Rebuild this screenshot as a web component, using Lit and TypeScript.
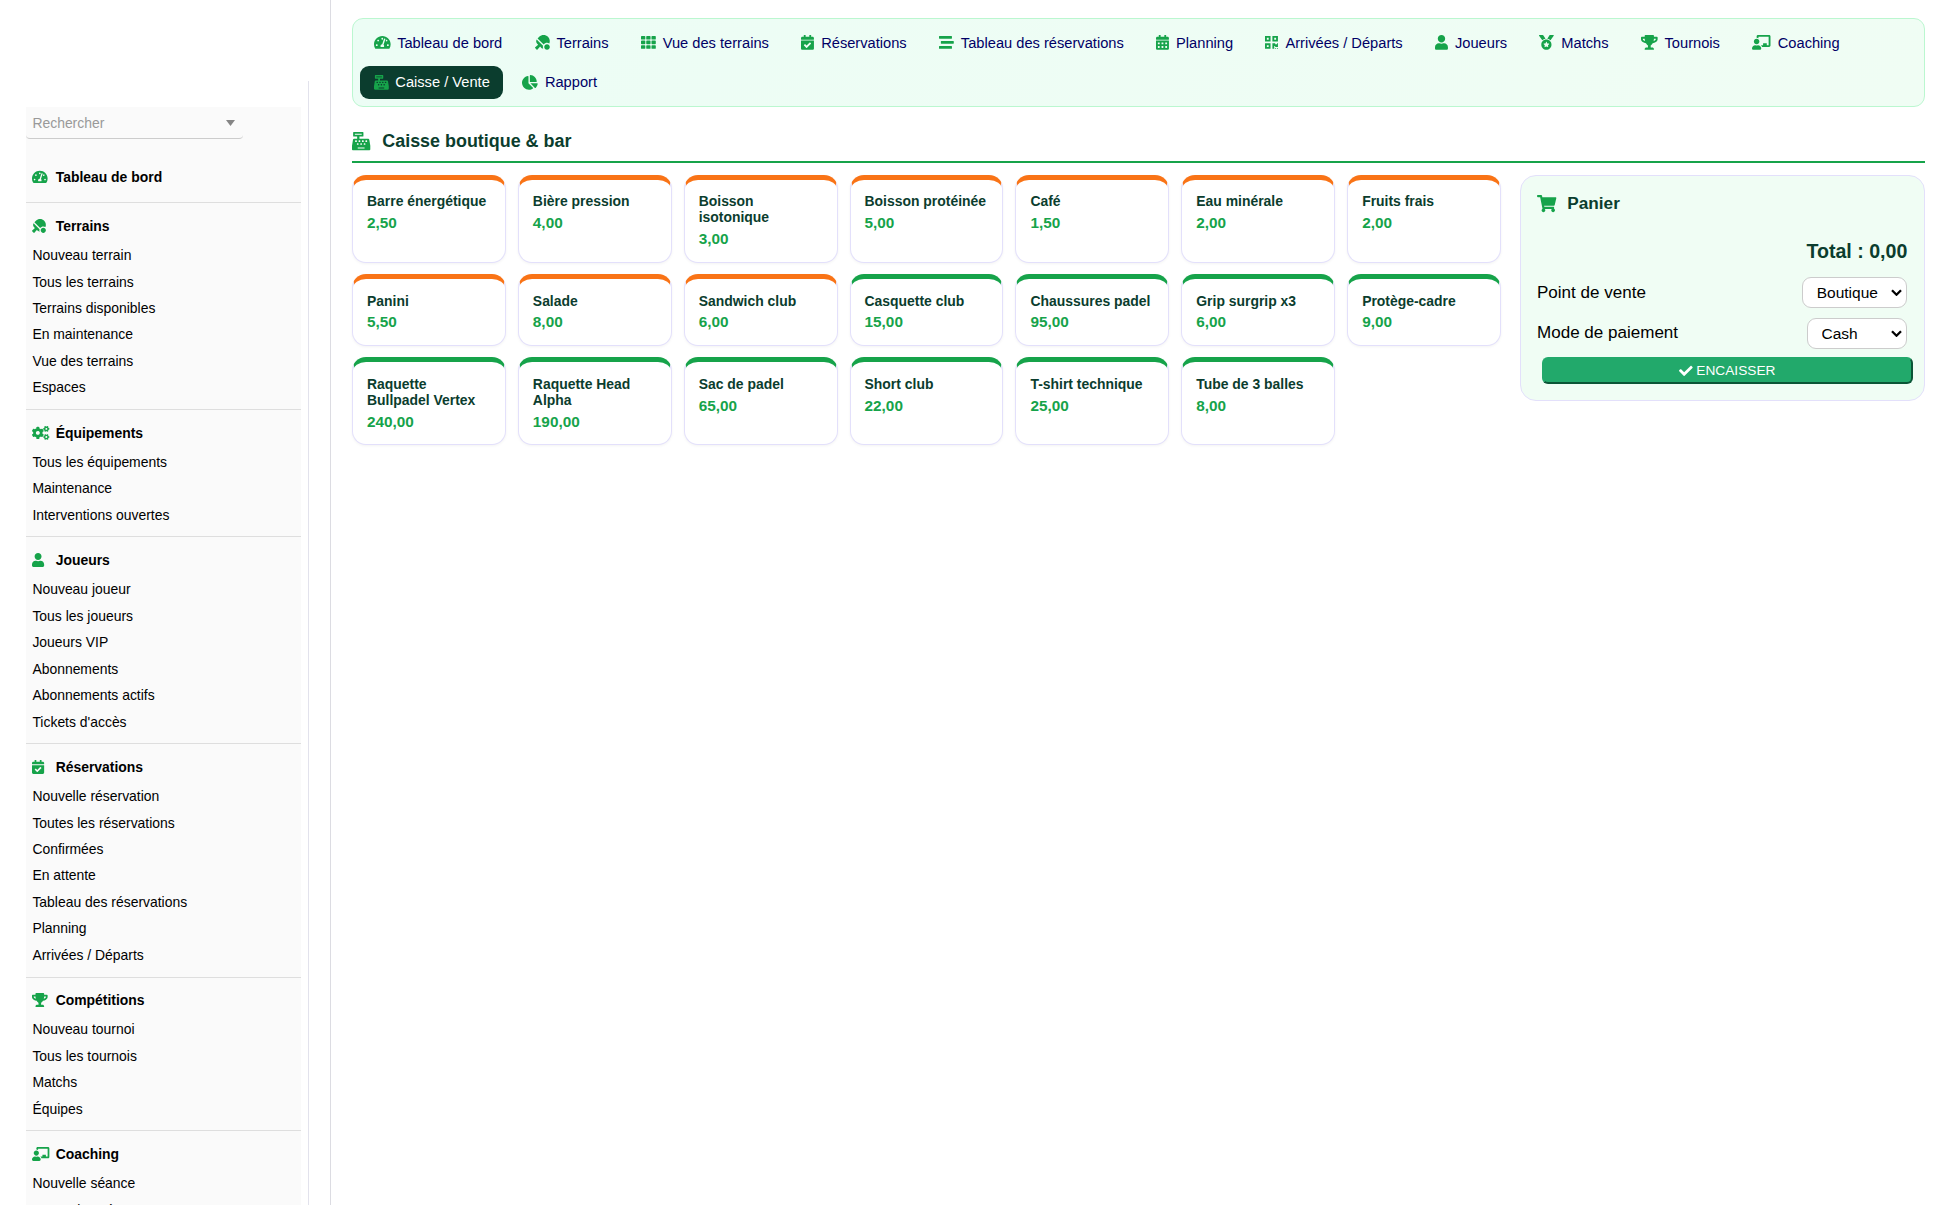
import { LitElement, html, svg, css } from "lit";
import { customElement, property } from "lit/decorators.js";

const box = (x: number, y: number) =>
  `M${x + 12} ${y}h40c6.600 0 12 5.400 12 12v40c0 6.600-5.400 12-12 12h-40c-6.600 0-12-5.400-12-12v-40c0-6.600 5.400-12 12-12z`;
const cell = (x: number, y: number) =>
  `M${x + 24} ${y}h101.330c13.260 0 24 10.750 24 24v80c0 13.260-10.740 24-24 24h-101.330c-13.260 0-24-10.740-24-24v-80c0-13.250 10.740-24 24-24z`;

// Each entry: [viewBox width, path]. All glyphs are 512 units high.
const ICONS: Record<string, [number, string]> = {
  gauge: [576, "M288 32C128.94 32 0 160.94 0 320c0 52.8 14.25 102.26 39.06 144.8 5.61 9.62 16.3 15.2 27.44 15.2h443c11.14 0 21.83-5.58 27.44-15.2C561.75 422.26 576 372.8 576 320c0-159.06-128.94-288-288-288zm0 64c14.71 0 26.58 10.13 30.32 23.65-1.11 2.26-2.64 4.23-3.45 6.67l-9.22 27.67c-5.13 3.49-10.97 6.01-17.64 6.01-17.67 0-32-14.33-32-32S270.33 96 288 96zM96 384c-17.67 0-32-14.33-32-32s14.33-32 32-32 32 14.33 32 32-14.33 32-32 32zm48-160c-17.67 0-32-14.33-32-32s14.33-32 32-32 32 14.33 32 32-14.33 32-32 32zm246.77-72.41l-61.33 184C343.13 347.33 352 364.54 352 384c0 11.72-3.38 22.55-8.88 32H232.88c-5.5-9.45-8.88-20.28-8.88-32 0-33.94 26.5-61.43 59.9-63.59l61.34-184.01c4.17-12.56 17.73-19.45 30.36-15.17 12.57 4.19 19.35 17.79 15.17 30.36zm14.66 57.2l15.52-46.55c3.47-1.29 7.13-2.23 11.05-2.23 17.67 0 32 14.33 32 32s-14.33 32-32 32c-11.38-.01-20.89-6.28-26.57-15.22zM480 384c-17.67 0-32-14.33-32-32s14.33-32 32-32 32 14.33 32 32-14.33 32-32 32z"],
  paddle: [512, "M496.2 296.5C527.7 218.7 512 126.2 449 63.1 365.1-21 229-21 145.1 63.1l-56 56.1 211.5 211.5c46.1-62.1 131.5-77.4 195.6-34.2zm-217.9 79.7L57.9 155.9c-27.3 45.3-21.7 105 17.3 144.1l34.5 34.6L6.7 424c-8.6 7.5-9.1 20.7-1 28.8l53.4 53.5c8 8.1 21.2 7.6 28.7-1L177.1 402l35.7 35.7c19.7 19.7 44.6 30.5 70.3 33.3-7.1-17-11-35.6-11-55.1-.1-13.8 2.5-27 6.2-39.7zM416 320c-53 0-96 43-96 96s43 96 96 96 96-43 96-96-43-96-96-96z"],
  grid: [512, [0, 181.33, 362.67].map((x) => [32, 192, 352].map((y) => cell(x, y)).join("")).join("")],
  calCheck: [448, "M436 160H12c-6.627 0-12-5.373-12-12v-36c0-26.51 21.49-48 48-48h48V12c0-6.627 5.373-12 12-12h40c6.627 0 12 5.373 12 12v52h128V12c0-6.627 5.373-12 12-12h40c6.627 0 12 5.373 12 12v52h48c26.51 0 48 21.49 48 48v36c0 6.627-5.373 12-12 12zM12 192h424c6.627 0 12 5.373 12 12v260c0 26.51-21.49 48-48 48H48c-26.51 0-48-21.49-48-48V204c0-6.627 5.373-12 12-12zm333.296 95.947l-28.169-28.398c-4.667-4.705-12.265-4.736-16.97-.068L194.12 364.665l-45.98-46.352c-4.667-4.705-12.266-4.736-16.971-.068l-28.397 28.17c-4.705 4.667-4.736 12.265-.068 16.97l82.601 83.269c4.667 4.705 12.265 4.736 16.97.068l142.953-141.805c4.705-4.667 4.736-12.265.068-16.97z"],
  stream: [512, "M16 128h416c8.84 0 16-7.16 16-16V48c0-8.84-7.16-16-16-16H16C7.16 32 0 39.16 0 48v64c0 8.84 7.16 16 16 16zm480 80H80c-8.84 0-16 7.16-16 16v64c0 8.84 7.16 16 16 16h416c8.84 0 16-7.16 16-16v-64c0-8.84-7.16-16-16-16zm-64 176H16c-8.84 0-16 7.16-16 16v64c0 8.84 7.16 16 16 16h416c8.84 0 16-7.16 16-16v-64c0-8.84-7.16-16-16-16z"],
  calDays: [448, "M436 160H12c-6.627 0-12-5.373-12-12v-36c0-26.51 21.49-48 48-48h48V12c0-6.627 5.373-12 12-12h40c6.627 0 12 5.373 12 12v52h128V12c0-6.627 5.373-12 12-12h40c6.627 0 12 5.373 12 12v52h48c26.51 0 48 21.49 48 48v36c0 6.627-5.373 12-12 12zM0 192h448v272c0 26.51-21.49 48-48 48H48c-26.51 0-48-21.49-48-48z" + [64, 192, 320].map((x) => box(x, 256) + box(x, 384)).join("")],
  qr: [448, "M0 224h192V32H0v192zM64 96h64v64H64V96zm192-64v192h192V32H256zm128 128h-64V96h64v64zM0 480h192V288H0v192zm64-128h64v64H64v-64zm352-64h32v128h-96v-32h-32v96h-64V288h96v32h64v-32zm0 160h32v32h-32v-32zm-64 0h32v32h-32v-32z"],
  user: [448, "M224 256c70.7 0 128-57.3 128-128S294.7 0 224 0 96 57.3 96 128s57.3 128 128 128zm89.6 32h-16.7c-22.2 10.2-46.9 16-72.9 16s-50.6-5.8-72.9-16h-16.7C60.2 288 0 348.2 0 422.4V464c0 26.5 21.5 48 48 48h352c26.5 0 48-21.5 48-48v-41.6c0-74.2-60.2-134.4-134.4-134.4z"],
  medal: [512, "M223.75 130.75L154.62 15.54A31.997 31.997 0 0 0 127.18 0H16.03C3.08 0-4.5 14.57 2.92 25.18l111.27 158.96c29.72-27.77 67.52-46.83 109.56-53.39zM495.97 0H384.82c-11.24 0-21.66 5.9-27.44 15.54l-69.13 115.21c42.04 6.56 79.84 25.62 109.56 53.38L509.08 25.18C516.5 14.57 508.92 0 495.97 0zM256 160c-97.2 0-176 78.8-176 176s78.8 176 176 176 176-78.8 176-176-78.8-176-176-176zm92.52 157.26l-37.93 36.96 8.97 52.22c1.6 9.36-8.26 16.51-16.65 12.09L256 393.88l-46.9 24.65c-8.4 4.45-18.25-2.74-16.65-12.09l8.97-52.22-37.93-36.96c-6.82-6.64-3.05-18.23 6.35-19.59l52.43-7.64 23.43-47.52c2.11-4.28 6.19-6.39 10.28-6.39 4.11 0 8.22 2.14 10.33 6.39l23.43 47.52 52.43 7.64c9.4 1.36 13.17 12.95 6.35 19.59z"],
  trophy: [576, "M552 64H448V24c0-13.3-10.7-24-24-24H152c-13.3 0-24 10.7-24 24v40H24C10.7 64 0 74.7 0 88v56c0 35.7 22.5 72.4 61.9 100.7 31.5 22.7 69.8 37.1 110 41.7C203.3 338.5 240 360 240 360v72h-48c-35.3 0-64 20.7-64 56v12c0 6.6 5.4 12 12 12h296c6.6 0 12-5.4 12-12v-12c0-35.3-28.7-56-64-56h-48v-72s36.7-21.5 68.1-73.6c40.3-4.6 78.6-19 110-41.7 39.3-28.3 61.9-65 61.9-100.7V88c0-13.3-10.7-24-24-24zM99.3 192.8C74.9 175.2 64 155.6 64 144v-16h64.2c1 32.6 5.8 61.2 12.8 86.2-15.1-5.2-29.2-12.4-41.7-21.4zM512 144c0 16.1-17.7 36.1-35.3 48.8-12.5 9-26.7 16.2-41.8 21.4 7-25 11.8-53.6 12.8-86.2H512v16z"],
  coach: [640, "M208 352c-2.39 0-4.78.35-7.06 1.09C187.98 357.3 174.35 360 160 360c-14.35 0-27.98-2.7-40.95-6.91-2.28-.74-4.66-1.09-7.05-1.09C49.94 352-.33 402.48 0 464.62.14 490.88 21.73 512 48 512h224c26.27 0 47.86-21.12 48-47.38.33-62.14-49.94-112.62-112-112.62zm-48-32c53.02 0 96-42.98 96-96s-42.98-96-96-96-96 42.98-96 96 42.98 96 96 96zM592 0H208c-26.47 0-48 22.25-48 49.59V96c23.42 0 45.1 6.78 64 17.8V64h352v288h-64v-64H384v64h-76.24c19.1 16.69 33.12 38.73 39.69 64H592c26.47 0 48-22.25 48-49.59V49.59C640 22.25 618.47 0 592 0z"],
  register: [512, "M511.1 378.8l-26.7-160c-2.6-15.4-15.9-26.7-31.6-26.7H208v-64h96c8.8 0 16-7.2 16-16V16c0-8.8-7.2-16-16-16H48c-8.800 0-16 7.200-16 16v96c0 8.800 7.200 16 16 16h96v64H59.100c-15.600 0-29 11.300-31.600 26.700L.8 378.700c-.6 3.500-.9 7-.9 10.500V480c0 17.700 14.300 32 32 32h448c17.700 0 32-14.300 32-32v-90.700c.1-3.500-.2-7-.8-10.500zM280 248c0-8.800 7.200-16 16-16h16c8.800 0 16 7.200 16 16v16c0 8.800-7.200 16-16 16h-16c-8.800 0-16-7.200-16-16v-16zm-32 64h16c8.800 0 16 7.200 16 16v16c0 8.800-7.200 16-16 16h-16c-8.800 0-16-7.200-16-16v-16c0-8.800 7.200-16 16-16zm-32-80c8.800 0 16 7.200 16 16v16c0 8.800-7.200 16-16 16h-16c-8.800 0-16-7.200-16-16v-16c0-8.800 7.200-16 16-16h16zM80 80V48h192v32H80zm40 200h-16c-8.800 0-16-7.200-16-16v-16c0-8.800 7.200-16 16-16h16c8.800 0 16 7.200 16 16v16c0 8.800-7.200 16-16 16zm16 64v-16c0-8.800 7.200-16 16-16h16c8.800 0 16 7.200 16 16v16c0 8.800-7.200 16-16 16h-16c-8.800 0-16-7.200-16-16zm216 112c0 4.400-3.600 8-8 8H168c-4.400 0-8-3.600-8-8v-16c0-4.400 3.600-8 8-8h176c4.400 0 8 3.600 8 8v16zm24-112c0 8.800-7.200 16-16 16h-16c-8.800 0-16-7.200-16-16v-16c0-8.800 7.200-16 16-16h16c8.800 0 16 7.200 16 16v16zm48-80c0 8.800-7.200 16-16 16h-16c-8.800 0-16-7.200-16-16v-16c0-8.800 7.200-16 16-16h16c8.800 0 16 7.200 16 16v16z"],
  pie: [544, "M527.79 288H290.5l158.03 158.03c6.04 6.04 15.98 6.53 22.19.68 38.7-36.46 65.32-85.61 73.13-140.86 1.34-9.46-6.51-17.85-16.06-17.85zm-15.83-64.8C503.72 103.74 408.26 8.28 288.8.04 279.68-.59 272 7.1 272 16.24V240h223.77c9.14 0 16.82-7.68 16.19-16.8zM224 288V50.71c0-9.55-8.39-17.4-17.84-16.06C86.99 51.49-4.1 155.6.14 280.37 4.5 408.51 114.83 513.59 243.03 511.98c50.4-.63 96.97-16.87 135.26-44.03 7.9-5.6 8.42-17.23 1.57-24.08L224 288z"],
  cart: [576, "M528.12 301.319l47.273-208C578.806 78.301 567.391 64 551.99 64H159.208l-9.166-44.81C147.758 8.021 137.93 0 126.529 0H24C10.745 0 0 10.745 0 24v16c0 13.255 10.745 24 24 24h69.883l70.248 343.435C147.325 417.1 136 435.222 136 456c0 30.928 25.072 56 56 56s56-25.072 56-56c0-15.674-6.447-29.835-16.824-40h209.647C430.447 426.165 424 440.326 424 456c0 30.928 25.072 56 56 56s56-25.072 56-56c0-22.172-12.888-41.332-31.579-50.405l5.517-24.276c3.413-15.018-8.002-29.319-23.403-29.319H218.117l-6.545-32h293.145c11.206 0 20.92-7.754 23.403-18.681z"],
  check: [512, "M173.898 439.404l-166.4-166.4c-9.997-9.997-9.997-26.206 0-36.204l36.203-36.204c9.997-9.998 26.207-9.998 36.204 0L192 312.69 432.095 72.596c9.997-9.997 26.207-9.997 36.204 0l36.203 36.204c9.997 9.997 9.997 26.206 0 36.204l-294.4 294.401c-9.998 9.997-26.207 9.997-36.204-.001z"],
  cogs: [640, "M512.1 191l-8.2 14.3c-3 5.3-9.4 7.5-15.1 5.4-11.8-4.4-22.6-10.7-32.1-18.6-4.6-3.8-5.8-10.5-2.8-15.7l8.2-14.3c-6.9-8-12.3-17.3-15.9-27.4h-16.5c-6 0-11.2-4.3-12.2-10.3-2-12-2.1-24.6 0-37.1 1-6 6.2-10.4 12.2-10.4h16.5c3.6-10.1 9-19.4 15.9-27.4l-8.2-14.3c-3-5.2-1.9-11.9 2.8-15.7 9.5-7.9 20.4-14.2 32.1-18.6 5.7-2.1 12.1.1 15.1 5.4l8.2 14.3c10.5-1.9 21.2-1.9 31.7 0L552 6.300c3-5.300 9.400-7.500 15.100-5.400 11.800 4.400 22.600 10.700 32.100 18.600 4.600 3.800 5.800 10.500 2.800 15.700l-8.200 14.300c6.900 8 12.300 17.300 15.900 27.400h16.500c6 0 11.200 4.300 12.200 10.300 2 12 2.100 24.600 0 37.100-1 6-6.200 10.400-12.200 10.400h-16.500c-3.600 10.100-9 19.400-15.900 27.400l8.200 14.300c3 5.200 1.900 11.900-2.800 15.700-9.500 7.900-20.400 14.200-32.100 18.600-5.700 2.100-12.100-.1-15.100-5.400l-8.200-14.300c-10.400 1.900-21.200 1.900-31.700 0zm-10.500-58.800c38.500 29.600 82.400-14.300 52.800-52.800-38.500-29.700-82.400 14.300-52.800 52.800zM386.300 286.100l33.700 16.800c10.100 5.800 14.500 18.100 10.500 29.100-8.900 24.200-26.400 46.400-42.600 65.800-7.400 8.900-20.200 11.100-30.300 5.300l-29.100-16.800c-16 13.700-34.600 24.600-54.900 31.700v33.600c0 11.600-8.300 21.600-19.700 23.600-24.600 4.200-50.400 4.400-75.900 0-11.500-2-20-11.900-20-23.600V418c-20.300-7.200-38.900-18-54.900-31.700L74 403c-10 5.800-22.900 3.600-30.300-5.300-16.200-19.400-33.300-41.600-42.200-65.700-4-10.900.4-23.200 10.500-29.100l33.300-16.800c-3.900-20.900-3.900-42.400 0-63.400L12 205.800c-10.100-5.800-14.600-18.100-10.500-29 8.900-24.200 26-46.400 42.200-65.800 7.400-8.900 20.200-11.100 30.300-5.300l29.100 16.800c16-13.700 34.600-24.600 54.900-31.700V57.100c0-11.500 8.200-21.500 19.600-23.500 24.600-4.200 50.500-4.400 76-.1 11.500 2 20 11.900 20 23.600v33.600c20.300 7.200 38.900 18 54.900 31.700l29.100-16.800c10-5.800 22.900-3.600 30.300 5.300 16.200 19.400 33.200 41.600 42.100 65.800 4 10.900.1 23.200-10 29.100l-33.700 16.800c3.900 21 3.900 42.500 0 63.500zm-117.600 21.100c59.200-77-28.700-164.900-105.700-105.700-59.200 77 28.700 164.900 105.700 105.700zm243.400 182.700l-8.200 14.300c-3 5.300-9.400 7.500-15.100 5.400-11.800-4.400-22.600-10.700-32.100-18.600-4.600-3.800-5.800-10.500-2.800-15.700l8.200-14.300c-6.900-8-12.300-17.300-15.900-27.400h-16.500c-6 0-11.200-4.300-12.200-10.300-2-12-2.100-24.600 0-37.100 1-6 6.200-10.400 12.200-10.400h16.500c3.600-10.100 9-19.400 15.900-27.400l-8.200-14.300c-3-5.200-1.900-11.900 2.800-15.700 9.500-7.900 20.400-14.200 32.100-18.600 5.700-2.100 12.100.1 15.100 5.400l8.200 14.300c10.500-1.900 21.200-1.900 31.700 0l8.200-14.300c3-5.300 9.400-7.500 15.100-5.400 11.800 4.400 22.600 10.700 32.100 18.600 4.600 3.800 5.800 10.500 2.800 15.700l-8.200 14.300c6.900 8 12.300 17.300 15.900 27.400h16.500c6 0 11.200 4.300 12.200 10.300 2 12 2.100 24.600 0 37.100-1 6-6.200 10.400-12.200 10.400h-16.500c-3.600 10.100-9 19.400-15.900 27.400l8.200 14.300c3 5.200 1.900 11.900-2.800 15.700-9.500 7.900-20.400 14.200-32.100 18.600-5.700 2.100-12.100-.1-15.100-5.400l-8.200-14.300c-10.400 1.900-21.200 1.900-31.700 0zM501.600 431c38.500 29.600 82.400-14.300 52.800-52.800-38.500-29.600-82.400 14.300-52.800 52.800z"],
};

@customElement("fa-icon")
class FaIcon extends LitElement {
  @property() name = "user";
  static styles = css`
    :host { display: inline-flex; flex: none; }
    .glyph { height: 1em; width: auto; display: block; fill: currentColor; overflow: visible; fill-rule: evenodd; }
  `;
  render() {
    const [w, d] = ICONS[this.name];
    return html`<svg class="glyph" viewBox="0 0 ${w} 512">${svg`<path d=${d}></path>`}</svg>`;
  }
}

const NAV: [string, string][] = [
  ["gauge", "Tableau de bord"], ["paddle", "Terrains"], ["grid", "Vue des terrains"],
  ["calCheck", "Réservations"], ["stream", "Tableau des réservations"], ["calDays", "Planning"],
  ["qr", "Arrivées / Départs"], ["user", "Joueurs"], ["medal", "Matchs"], ["trophy", "Tournois"],
  ["coach", "Coaching"], ["register", "Caisse / Vente"], ["pie", "Rapport"],
];

const MENU: { icon: string; title: string; items: string[] }[] = [
  { icon: "paddle", title: "Terrains", items: ["Nouveau terrain", "Tous les terrains", "Terrains disponibles", "En maintenance", "Vue des terrains", "Espaces"] },
  { icon: "cogs", title: "Équipements", items: ["Tous les équipements", "Maintenance", "Interventions ouvertes"] },
  { icon: "user", title: "Joueurs", items: ["Nouveau joueur", "Tous les joueurs", "Joueurs VIP", "Abonnements", "Abonnements actifs", "Tickets d'accès"] },
  { icon: "calCheck", title: "Réservations", items: ["Nouvelle réservation", "Toutes les réservations", "Confirmées", "En attente", "Tableau des réservations", "Planning", "Arrivées / Départs"] },
  { icon: "trophy", title: "Compétitions", items: ["Nouveau tournoi", "Tous les tournois", "Matchs", "Équipes"] },
  { icon: "coach", title: "Coaching", items: ["Nouvelle séance", "Toutes les séances"] },
];

const PRODUCTS: [string, string, string][] = [
  ["Barre énergétique", "2,50", "bar"], ["Bière pression", "4,00", "bar"], ["Boisson isotonique", "3,00", "bar"],
  ["Boisson protéinée", "5,00", "bar"], ["Café", "1,50", "bar"], ["Eau minérale", "2,00", "bar"],
  ["Fruits frais", "2,00", "bar"], ["Panini", "5,50", "bar"], ["Salade", "8,00", "bar"],
  ["Sandwich club", "6,00", "bar"], ["Casquette club", "15,00", "shop"], ["Chaussures padel", "95,00", "shop"],
  ["Grip surgrip x3", "6,00", "shop"], ["Protège-cadre", "9,00", "shop"], ["Raquette Bullpadel Vertex", "240,00", "shop"],
  ["Raquette Head Alpha", "190,00", "shop"], ["Sac de padel", "65,00", "shop"], ["Short club", "22,00", "shop"],
  ["T-shirt technique", "25,00", "shop"], ["Tube de 3 balles", "8,00", "shop"],
];

@customElement("side-menu")
class SideMenu extends LitElement {
  static styles = css`
    :host { display: block; flex: none; box-sizing: border-box; width: 331px; height: 1205px; padding-top: 81px; border-right: 1px solid #dcdce2; overflow: hidden; }
    .rail { box-sizing: border-box; width: 309px; height: 1124px; padding: 25.700px 7px 0 25.700px; border-right: 1px solid #e2e2ec; }
    .panel { background: #fafafa; height: 1110px; font-size: 13.930px; color: #000; }
    .search { box-sizing: border-box; width: 217.300px; height: 32.300px; padding: 2px 8px 0 6.700px; display: flex; align-items: center; justify-content: space-between; border-bottom: 1px solid #ccc; border-radius: 0 0 4px 4px; color: #999; }
    .caret { width: 9px; height: 6px; fill: #858585; display: block; }
    .home { height: 63.300px; display: flex; align-items: center; }
    .head { display: flex; align-items: center; font-weight: bold; padding-left: 6.700px; height: 20px; }
    .slot { width: 23.300px; flex: none; color: #16a34a; display: flex; font-size: 13.900px; }
    .home .head { margin-top: 12.400px; }
    .group { border-top: 1px solid #dedede; padding: 12.500px 0 8.200px; }
    .list { list-style: none; margin: 6.300px 0 0; padding: 0 0 0 6.700px; }
    .item { line-height: 26.480px; height: 26.480px; }
  `;
  head(icon: string, title: string) {
    return html`<div class="head"><span class="slot"><fa-icon name=${icon}></fa-icon></span>${title}</div>`;
  }
  render() {
    return html`<div class="rail"><div class="panel">
      <div class="search"><span>Rechercher</span><svg class="caret" viewBox="0 0 9 6"><path d="M0 0h9L4.500 6z"></path></svg></div>
      <div class="home">${this.head("gauge", "Tableau de bord")}</div>
      ${MENU.map((g) => html`<div class="group">${this.head(g.icon, g.title)}
        <ul class="list">${g.items.map((i) => html`<li class="item">${i}</li>`)}</ul></div>`)}
    </div></div>`;
  }
}

@customElement("basket-panel")
class BasketPanel extends LitElement {
  static styles = css`
    :host { display: block; box-sizing: border-box; width: 405px; flex: none; height: 226px; padding: 18.200px 16.700px 0 16px; border: 1px solid #e3e0fb; border-radius: 16px; background: #f0fdf4; color: #000; }
    .title { display: flex; align-items: center; height: 20px; gap: 11px; font-weight: bold; font-size: 17.200px; color: #0b3d2e; }
    .title fa-icon { color: #16a34a; }
    .total { margin-top: 24.800px; line-height: 24px; text-align: right; font-weight: bold; font-size: 19.600px; color: #0b3d2e; }
    .row { display: flex; align-items: center; justify-content: space-between; height: 31px; font-size: 17.050px; margin-top: 9.500px; }
    .first { margin-top: 14.600px; }
    .pick { display: grid; align-items: center; height: 31px; }
    .field { grid-area: 1 / 1; box-sizing: border-box; height: 31px; border: 1px solid #ccc; border-radius: 9px; background: #fff; appearance: none; font: 15.500px "Liberation Sans", Arial, sans-serif; color: #000; padding: 0 28px 0 13.700px; margin: 0; }
    .place { width: 105.300px; }
    .mode { width: 100.500px; }
    .chev { grid-area: 1 / 1; justify-self: end; margin-right: 5px; width: 11px; height: 7px; fill: none; stroke: #000; stroke-width: 2.300; }
    .pay { display: flex; align-items: center; justify-content: center; gap: 3.700px; box-sizing: border-box; width: 371px; height: 27px; margin: 7.800px 0 0 4.700px; padding: 1px 0 0; background: #22a96b; color: #fff; border: 2px solid #22a96b; border-right-color: #0b5536; border-bottom-color: #0b5536; border-radius: 6px; font: 13.700px "Liberation Sans", Arial, sans-serif; }
  `;
  render() {
    const chev = html`<svg class="chev" viewBox="0 0 11 7"><path d="M1 1.200l4.500 4.500L10 1.200"></path></svg>`;
    return html`
      <div class="title"><fa-icon name="cart"></fa-icon><span>Panier</span></div>
      <div class="total">Total : 0,00</div>
      <div class="row first"><span>Point de vente</span><span class="pick"><select class="field place"><option>Boutique</option></select>${chev}</span></div>
      <div class="row"><span>Mode de paiement</span><span class="pick"><select class="field mode"><option>Cash</option></select>${chev}</span></div>
      <button class="pay"><fa-icon name="check"></fa-icon><span>ENCAISSER</span></button>`;
  }
}

@customElement("app-root")
class AppRoot extends LitElement {
  static styles = css`
    :host { display: flex; width: 1946px; height: 1205px; overflow: hidden; background: #fff; font-family: "Liberation Sans", Arial, sans-serif; }
    .main { flex: 1; min-width: 0; padding: 18.300px 21px 0 21px; }
    .nav { display: flex; flex-wrap: wrap; gap: 5.700px 5.350px; padding: 7px; border: 1px solid #bbf7d0; border-radius: 11px; background: linear-gradient(135deg, #ecfdf5, #f0fdf4); }
    .link { box-sizing: border-box; display: flex; align-items: center; gap: 7px; height: 33.700px; padding: 0 13.500px 1.200px; border-radius: 9px; font-size: 14.670px; color: #000066; white-space: nowrap; }
    .link fa-icon { color: #16a34a; font-size: 14.800px; }
    .on { background: #0b3d2e; color: #fff; }
    .title { display: flex; align-items: center; gap: 12px; height: 39px; margin: 13.600px 0 11.700px; padding: 1px 0 0; border-bottom: 2px solid #16a34a; font-size: 17.920px; font-weight: bold; color: #0b3d2e; }
    .title fa-icon { color: #16a34a; font-size: 18.300px; margin-bottom: 1px; }
    .body { display: flex; justify-content: space-between; align-items: flex-start; }
    .grid { width: 1149px; display: grid; grid-template-columns: repeat(7, 1fr); gap: 11.500px 12px; }
    .card { border: 1px solid #e3e0fb; border-top: 5px solid #16a34a; border-radius: 14px; padding: 13.500px 13px 13.200px 14px; background: #fff; box-shadow: 0 1px 3px rgba(0, 0, 0, 0.05); }
    .bar { border-top-color: #f97316; }
    .name { font-size: 13.930px; line-height: 16.300px; font-weight: bold; color: #0b3d2e; }
    .price { margin-top: 4.500px; font-size: 15.330px; line-height: 18.200px; font-weight: bold; color: #16a34a; }
  `;
  render() {
    return html`
      <side-menu></side-menu>
      <main class="main">
        <nav class="nav">${NAV.map(([icon, label]) => html`<a class="link ${icon === "register" ? "on" : ""}"><fa-icon name=${icon}></fa-icon><span>${label}</span></a>`)}</nav>
        <div class="title"><fa-icon name="register"></fa-icon><span>Caisse boutique &amp; bar</span></div>
        <div class="body">
          <div class="grid">${PRODUCTS.map(([n, p, k]) => html`<div class="card ${k}"><div class="name">${n}</div><div class="price">${p}</div></div>`)}</div>
          <basket-panel></basket-panel>
        </div>
      </main>`;
  }
}
